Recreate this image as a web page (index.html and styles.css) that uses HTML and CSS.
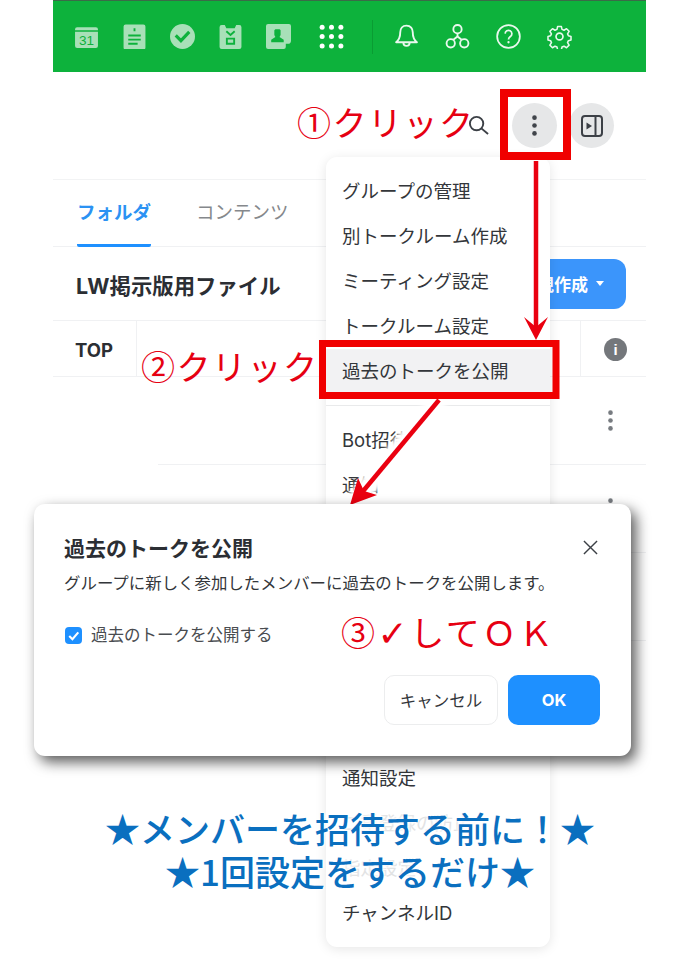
FILE: index.html
```html
<!DOCTYPE html>
<html lang="ja">
<head>
<meta charset="utf-8">
<title>過去のトークを公開</title>
<link rel="stylesheet" href="styles.css">
</head>
<body>
<div class="app">
  <header class="topbar">
    <div class="apps">
      <svg class="ic" viewBox="0 0 24 24"><path fill="#a8e0b8" d="M1 5a2 2 0 0 1 2-2h18a2 2 0 0 1 2 2v1H1z"/><path fill="#a8e0b8" d="M1 7.500h22V21a2 2 0 0 1-2 2H3a2 2 0 0 1-2-2z"/><text x="12" y="20" class="cal">31</text></svg>
      <svg class="ic" viewBox="0 0 24 24"><path fill="#a8e0b8" d="M1.500 2.500a2 2 0 0 1 2-2h17a2 2 0 0 1 2 2v20a2 2 0 0 1-2 2h-17a2 2 0 0 1-2-2z"/><path stroke="#0db23c" stroke-width="1.800" fill="none" d="M6 11h12M6 15h12M6 19h9M12 4v3"/></svg>
      <svg class="ic" viewBox="0 0 24 24"><circle cx="12" cy="12" r="12" fill="#a8e0b8"/><path fill="none" stroke="#0db23c" stroke-width="3" d="M5.500 11l5 5 8-8.500"/></svg>
      <svg class="ic" viewBox="0 0 24 24"><path fill="#a8e0b8" d="M1.500 3a2 2 0 0 1 2-2h3l1.500 3h8l1.500-3h3a2 2 0 0 1 2 2v19a2 2 0 0 1-2 2h-17a2 2 0 0 1-2-2z"/><path fill="none" stroke="#0db23c" stroke-width="1.800" d="M8 7l4 3.500L16 7M8.500 14h7v5h-7z"/></svg>
      <svg class="ic" viewBox="0 0 24 24"><path fill="#a8e0b8" d="M0 2a2 2 0 0 1 2-2h20a2 2 0 0 1 2 2v14a3 3 0 0 1-3 3h-2v3a2 2 0 0 1-2 2H2a2 2 0 0 1-2-2z"/><path fill="#0db23c" d="M9 5h4a1.500 1.500 0 0 1 1 1v4.500l-1 2 4 2.500v2.500H5V15l4-2.500-1-2V6z"/></svg>
      <svg class="ic ic-dots" viewBox="0 0 24 24"><g fill="#fff"><circle cx="3" cy="3" r="2.400"/><circle cx="12" cy="3" r="2.400"/><circle cx="21" cy="3" r="2.400"/><circle cx="3" cy="12" r="2.400"/><circle cx="12" cy="12" r="2.400"/><circle cx="21" cy="12" r="2.400"/><circle cx="3" cy="21" r="2.400"/><circle cx="12" cy="21" r="2.400"/><circle cx="21" cy="21" r="2.400"/></g></svg>
    </div>
    <span class="bar-sep"></span>
    <div class="tools">
      <svg class="ic" viewBox="0 0 24 24"><path fill="none" stroke="#eaf8ee" stroke-width="1.800" stroke-linejoin="round" d="M12 1.500c-4 0-6 3-6 6.500 0 5-2 8-4 9.500h20c-2-1.500-4-4.500-4-9.500 0-3.500-2-6.500-6-6.500zM9 18a3 3 0 0 0 6 0"/></svg>
      <svg class="ic" viewBox="0 0 24 24"><g fill="none" stroke="#eaf8ee" stroke-width="1.800"><circle cx="12" cy="5" r="4"/><circle cx="5.500" cy="18.500" r="4"/><circle cx="18.500" cy="18.500" r="4"/><path d="M12 9v3M8 15l4-3 4 3"/></g></svg>
      <svg class="ic" viewBox="0 0 26 26"><circle cx="13" cy="13" r="11.800" fill="none" stroke="#eaf8ee" stroke-width="1.800"/><path fill="none" stroke="#eaf8ee" stroke-width="1.800" d="M9.500 10a3.500 3.500 0 1 1 5.500 3c-1.300.9-2 1.500-2 3"/><circle cx="13" cy="19" r="1.200" fill="#eaf8ee"/></svg>
      <svg class="ic" viewBox="0 0 26 26"><g fill="none" stroke="#eaf8ee" stroke-width="1.800" stroke-linejoin="round"><circle cx="13" cy="13" r="3.600"/><path d="M10.800 1.500h4.400l.7 3.300 2.300 1 2.900-1.800 3 3-1.800 2.900 1 2.300 3 .7v4.200l-3 .7-1 2.300 1.800 2.900-3 3-2.900-1.800-2.300 1-.7 3h-4.400l-.7-3-2.300-1-2.900 1.800-3-3 1.800-2.900-1-2.300-3-.7v-4.200l3-.7 1-2.300-1.800-2.900 3-3 2.900 1.800 2.300-1z" transform="translate(1.300 1.300) scale(.9)"/></g></svg>
    </div>
  </header>

  <div class="actions">
    <svg class="search" viewBox="0 0 22 22"><circle cx="9" cy="9" r="7" fill="none" stroke="#3c4046" stroke-width="2"/><path d="M14 14l7 6" stroke="#3c4046" stroke-width="2"/></svg>
    <span class="round-btn">
      <svg class="kebab" viewBox="0 0 4 20"><g fill="#40444a"><circle cx="2" cy="2.500" r="2.200"/><circle cx="2" cy="10" r="2.200"/><circle cx="2" cy="17.500" r="2.200"/></g></svg>
    </span>
    <span class="round-btn">
      <svg class="panel" viewBox="0 0 22 22"><rect x="1" y="1" width="20" height="20" rx="3" fill="none" stroke="#3c4046" stroke-width="2"/><path d="M14.500 1v20" stroke="#3c4046" stroke-width="2"/><path d="M5.500 7.500l5.500 3.500-5.500 3.500z" fill="#3c4046"/></svg>
    </span>
  </div>

  <nav class="tabs">
    <span class="tab tab-on">フォルダ</span>
    <span class="tab">コンテンツ</span>
  </nav>

  <div class="title-row">
    <h1 class="folder">LW掲示版用ファイル</h1>
    <span class="new-btn">新規作成<i class="caret"></i></span>
  </div>

  <div class="crumb-row">
    <span class="crumb">TOP</span>
    <span class="crumb-fill"></span>
    <span class="crumb-info"><b class="info">i</b></span>
  </div>

  <div class="list-row">
    <svg class="kebab-sm" viewBox="0 0 4 20"><g fill="#777b80"><circle cx="2" cy="2.500" r="2.200"/><circle cx="2" cy="10" r="2.200"/><circle cx="2" cy="17.500" r="2.200"/></g></svg>
  </div>
  <div class="list-row">
    <svg class="kebab-sm" viewBox="0 0 4 20"><g fill="#777b80"><circle cx="2" cy="2.500" r="2.200"/><circle cx="2" cy="10" r="2.200"/><circle cx="2" cy="17.500" r="2.200"/></g></svg>
  </div>
  <div class="list-row"></div>
</div>

<ul class="menu">
  <li>グループの管理</li>
  <li>別トークルーム作成</li>
  <li>ミーティング設定</li>
  <li>トークルーム設定</li>
  <li class="menu-on">過去のトークを公開</li>
  <li class="menu-div">Bot招待</li>
  <li>通知</li>
  <li></li>
  <li></li>
  <li></li>
  <li></li>
  <li></li>
  <li class="menu-gap">通知設定</li>
  <li class="menu-faint">二重登録の防止</li>
  <li class="menu-faint">指定設定</li>
  <li>チャンネルID</li>
</ul>

<svg class="marks" viewBox="0 0 700 980">
  <defs>
    <filter id="soft" x="-30%" y="-30%" width="160%" height="160%"><feGaussianBlur stdDeviation="2"/></filter>
  </defs>
  <path d="M440 400L356 500" stroke="#fff" stroke-width="20" filter="url(#soft)"/>
  <g fill="none" stroke="#f00000">
    <rect x="504" y="93" width="63" height="63" stroke-width="8"/>
    <rect x="322.500" y="343.500" width="233.500" height="52" stroke-width="7"/>
  </g>
  <path d="M536 161v170" stroke="#ea0010" stroke-width="4.500"/>
  <path d="M524 317l12 23 12-23-12 10z" fill="#ea0010"/>
  <path d="M439 400l-80 96" stroke="#ea0010" stroke-width="4.500"/>
  <path d="M350 505l8-27 6 13 13 4z" fill="#ea0010"/>
</svg>

<p class="note note-1">①クリック</p>
<p class="note note-2">②クリック</p>

<section class="dialog">
  <div class="dialog-head">
    <h2 class="dialog-title">過去のトークを公開</h2>
    <svg class="close" viewBox="0 0 16 16"><path d="M1 1l14 14M15 1L1 15" stroke="#3c4046" stroke-width="1.500"/></svg>
  </div>
  <p class="dialog-text">グループに新しく参加したメンバーに過去のトークを公開します。</p>
  <label class="check-row">
    <span class="check"><svg viewBox="0 0 16 16"><path d="M4 8.500l3 3 5.500-6.500" fill="none" stroke="#fff" stroke-width="2"/></svg></span>
    過去のトークを公開する
  </label>
  <div class="dialog-foot">
    <span class="btn btn-ghost">キャンセル</span>
    <span class="btn btn-ok">OK</span>
  </div>
</section>

<p class="note note-3">③<span class="tick">✓</span>してＯＫ</p>

<p class="banner">★メンバーを招待する前に！★<br>★1回設定をするだけ★</p>
</body>
</html>
```
FILE: styles.css
```css
* { box-sizing: border-box; }
html, body { margin: 0; padding: 0; }
body {
  width: 700px;
  height: 980px;
  position: relative;
  overflow: hidden;
  background: #fff;
  color: #2b2e33;
  font-family: "Inter", "Noto Sans CJK JP", sans-serif;
}
.app { width: 593px; margin-left: 53px; }

.topbar {
  height: 72px;
  background: #0db23c;
  border-top: 1px solid #3a6b48;
  display: flex;
  align-items: center;
  padding-left: 21px;
}
.apps { display: flex; align-items: center; gap: 23px; }
.ic { width: 25px; height: 25px; display: block; }
.ic-dots { margin-left: 5px; }
.cal { font: 13px "Liberation Sans", sans-serif; fill: #0db23c; text-anchor: middle; }
.bar-sep { width: 1px; height: 34px; margin: 0 21px 0 28px; background: #0a9c33; }
.tools { display: flex; align-items: center; gap: 26px; }

.actions {
  height: 108px;
  border-bottom: 1px solid #f2f3f4;
  display: flex;
  align-items: center;
  justify-content: flex-end;
  padding: 0 32px 0 0;
  gap: 13px;
}
.search { width: 21px; height: 21px; margin-right: 10px; }
.round-btn {
  width: 45px;
  height: 45px;
  border-radius: 50%;
  background: #e6e7e8;
  display: flex;
  align-items: center;
  justify-content: center;
}
.round-btn + .round-btn { margin-left: -1px; }
.kebab { width: 5px; height: 21px; }
.panel { width: 22px; height: 22px; }

.tabs {
  height: 67px;
  display: flex;
  gap: 45px;
  padding-left: 24px;
  border-bottom: 1px solid #f0f1f3;
}
.tab { height: 67px; line-height: 65px; font-size: 18.500px; color: #85888c; }
.tab-on { color: #2b92f3; font-weight: 700; border-bottom: 3px solid #1e90ff; border-radius: 0 0 2px 2px; }

.title-row {
  height: 74px;
  display: flex;
  align-items: center;
  justify-content: space-between;
  padding: 0 20px 0 23px;
  border-bottom: 1px solid #f0f1f3;
}
.folder { margin: 0; padding-top: 2px; font-size: 21.400px; font-weight: 700; color: #2b2e33; }
.new-btn {
  width: 132px;
  height: 50px;
  padding-left: 4px;
  background: #3b95fb;
  border-radius: 12px;
  color: #fff;
  font-size: 17px;
  font-weight: 700;
  display: flex;
  align-items: center;
  justify-content: center;
  gap: 8px;
}
.caret { width: 0; height: 0; border: 4px solid transparent; border-top: 5px solid #fff; border-bottom: 0; }

.crumb-row {
  height: 56px;
  display: flex;
  border-bottom: 1px solid #f0f1f3;
}
.crumb {
  width: 84px;
  padding-left: 22px;
  line-height: 58px;
  font-size: 18.500px;
  font-weight: 700;
  border-right: 1px solid #f0f1f3;
}
.crumb-fill { flex: 1; }
.crumb-info {
  width: 66px;
  border-left: 1px solid #f0f1f3;
  display: flex;
  align-items: center;
  padding: 2px 0 0 23px;
}
.info {
  width: 23px;
  height: 23px;
  border-radius: 50%;
  background: #74777b;
  color: #fff;
  font: 700 15px/23px "Liberation Sans", sans-serif;
  text-align: center;
}

.list-row {
  height: 88px;
  margin-left: 105px;
  border-bottom: 1px solid #f0f1f3;
  display: flex;
  align-items: center;
  justify-content: flex-end;
  padding-right: 33px;
}
.kebab-sm { width: 5px; height: 21px; }

.menu {
  position: absolute;
  left: 326px;
  top: 157px;
  width: 224px;
  height: 790px;
  margin: 0;
  padding: 12px 0 0;
  list-style: none;
  background: #fff;
  border-radius: 11px;
  box-shadow: 0 2px 12px rgba(0, 0, 0, .1);
}
.menu li {
  height: 45px;
  line-height: 45px;
  padding-left: 16px;
  font-size: 18.500px;
  color: #33363a;
  white-space: nowrap;
}
.menu-on { background: #f2f2f3; }
.menu .menu-div { height: 58px; padding-top: 12px; border-top: 1px solid #e9eaeb; margin-top: 11px; }
.menu .menu-gap { margin-top: 23px; }
.menu .menu-faint { color: #e2e3e4; }

.marks { position: absolute; left: 0; top: 0; width: 700px; height: 980px; pointer-events: none; }

.note { position: absolute; margin: 0; color: #e60012; font-family: "Noto Sans CJK JP", sans-serif; white-space: nowrap; line-height: 1; }
.note-1 { left: 297px; top: 105px; font-size: 34px; letter-spacing: 1.500px; }
.note-2 { left: 141px; top: 349px; font-size: 34px; letter-spacing: 1.500px; }
.note-3 { left: 341px; top: 615px; font-size: 34px; letter-spacing: 2.500px; }
.tick { font-family: "DejaVu Sans", sans-serif; font-size: 36px; font-weight: 700; line-height: 0; }

.dialog {
  position: absolute;
  left: 34px;
  top: 504px;
  width: 597px;
  height: 252px;
  padding: 29px 31px 0 30px;
  background: #fff;
  border-radius: 11px;
  box-shadow: 5px 6px 14px rgba(0, 0, 0, .65);
  display: flex;
  flex-direction: column;
}
.dialog-head { display: flex; align-items: center; justify-content: space-between; height: 28px; }
.dialog-title { margin: 0; font-size: 21px; font-weight: 700; color: #2b2e33; }
.close { width: 15px; height: 15px; margin-right: 2px; }
.dialog-text { margin: 11px 0 0; font-size: 16.450px; line-height: 22px; color: #33363a; white-space: nowrap; }
.check-row { display: flex; align-items: center; gap: 9px; margin-top: 30px; padding-left: 1px; font-size: 16.500px; line-height: 22px; color: #494c50; }
.check { width: 17px; height: 17px; border-radius: 4px; background: #1e90ff; display: block; }
.check svg { display: block; width: 17px; height: 17px; }
.dialog-foot { margin-top: auto; margin-bottom: 31px; display: flex; justify-content: flex-end; gap: 10px; }
.btn { height: 50px; border-radius: 10px; display: flex; align-items: center; justify-content: center; font-size: 16.500px; }
.btn-ghost { width: 114px; border: 1px solid #ecedee; color: #33363a; }
.btn-ok { width: 92px; background: #1e90ff; color: #fff; font-weight: 700; }

.banner {
  position: absolute;
  left: 0;
  top: 806px;
  width: 700px;
  margin: 0;
  text-align: center;
  color: #0a6fbf;
  font-family: "Noto Sans CJK JP", sans-serif;
  font-size: 35px;
  font-weight: 500;
  line-height: 43px;
  text-shadow: 0 0 3px #fff, 0 0 3px #fff, 0 0 5px #fff;
}
```
